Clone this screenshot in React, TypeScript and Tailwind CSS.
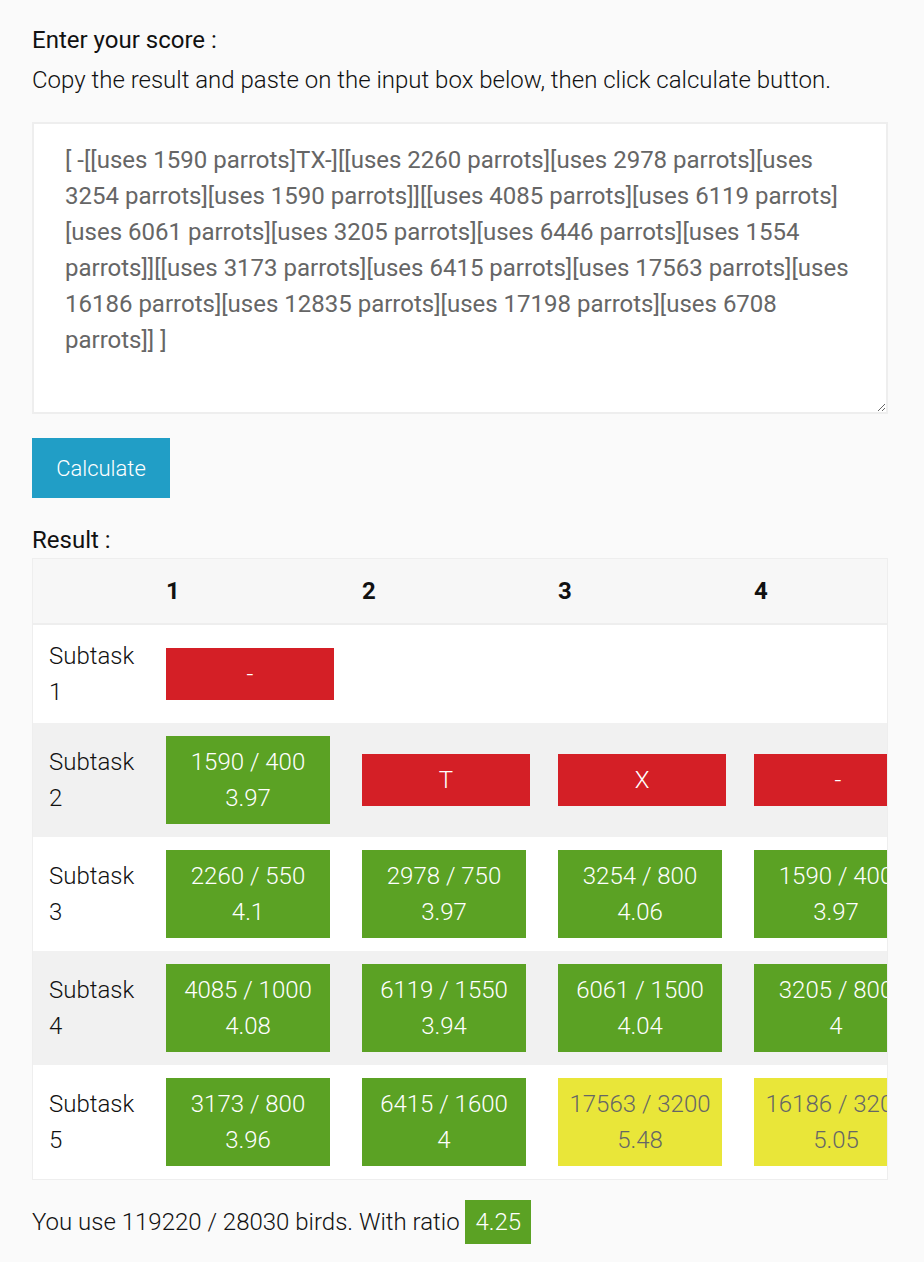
type Cell = { kind: "ok" | "warn" | "bad"; top: string; bottom?: string } | null;

const rows: Cell[][] = [
  [{ kind: "bad", top: "-" }, null, null, null],
  [
    { kind: "ok", top: "1590 / 400", bottom: "3.97" },
    { kind: "bad", top: "T" },
    { kind: "bad", top: "X" },
    { kind: "bad", top: "-" },
  ],
  [
    { kind: "ok", top: "2260 / 550", bottom: "4.1" },
    { kind: "ok", top: "2978 / 750", bottom: "3.97" },
    { kind: "ok", top: "3254 / 800", bottom: "4.06" },
    { kind: "ok", top: "1590 / 400", bottom: "3.97" },
  ],
  [
    { kind: "ok", top: "4085 / 1000", bottom: "4.08" },
    { kind: "ok", top: "6119 / 1550", bottom: "3.94" },
    { kind: "ok", top: "6061 / 1500", bottom: "4.04" },
    { kind: "ok", top: "3205 / 800", bottom: "4" },
  ],
  [
    { kind: "ok", top: "3173 / 800", bottom: "3.96" },
    { kind: "ok", top: "6415 / 1600", bottom: "4" },
    { kind: "warn", top: "17563 / 3200", bottom: "5.48" },
    { kind: "warn", top: "16186 / 3200", bottom: "5.05" },
  ],
];

const scoreText =
  "[ -[[uses 1590 parrots]TX-][[uses 2260 parrots][uses 2978 parrots][uses 3254 parrots][uses 1590 parrots]][[uses 4085 parrots][uses 6119 parrots][uses 6061 parrots][uses 3205 parrots][uses 6446 parrots][uses 1554 parrots]][[uses 3173 parrots][uses 6415 parrots][uses 17563 parrots][uses 16186 parrots][uses 12835 parrots][uses 17198 parrots][uses 6708 parrots]] ]";

function ScoreBox({ cell }: { cell: Cell }) {
  if (!cell) return null;
  if (cell.kind === "bad") {
    return (
      <div className="w-[168px] bg-[#d41f26] py-2 text-center leading-9 text-white">{cell.top}</div>
    );
  }
  const color = cell.kind === "ok" ? "bg-[#5ba224] text-white" : "bg-[#e9e639] text-[#666666]";
  return (
    <div className={`w-[164px] py-2 text-center leading-9 whitespace-nowrap ${color}`}>
      <div>{cell.top}</div>
      <div>{cell.bottom}</div>
    </div>
  );
}

export default function App() {
  return (
    <div className="min-h-screen bg-[#fafafa] font-['Roboto',sans-serif] text-[24px] text-[#111111]">
      <div className="pl-8 pr-9 pt-[22px] pb-8">
        <p className="leading-9">Enter your score :</p>
        <p className="mt-1 font-light leading-9">
          Copy the result and paste on the input box below, then click calculate button.
        </p>

        <textarea
          readOnly
          value={scoreText}
          className="mt-6 block h-[292px] w-full border-2 border-[#eeeeee] bg-white px-[31px] pt-[18px] font-['Roboto',sans-serif] text-[24px] leading-9 text-[#666666] outline-none"
        />

        <button className="mt-6 h-[60px] w-[138px] bg-[#219ec6] text-[22px] font-light text-white">
          Calculate
        </button>

        <p className="mt-6 leading-9">Result :</p>

        <div className="overflow-hidden border border-[#eeeeee] bg-white">
          <table className="w-[901px] table-fixed border-collapse">
            <colgroup>
              <col className="w-[117px]" />
              <col className="w-[196px]" />
              <col className="w-[196px]" />
              <col className="w-[196px]" />
              <col className="w-[196px]" />
            </colgroup>
            <thead>
              <tr className="border-b-2 border-[#eeeeee] bg-[#f7f7f7]">
                <th />
                {[1, 2, 3, 4].map((n) => (
                  <th key={n} className="py-[14px] pl-4 text-left font-bold leading-9">
                    {n}
                  </th>
                ))}
              </tr>
            </thead>
            <tbody>
              {rows.map((row, i) => (
                <tr key={i} className={i % 2 === 1 ? "bg-[#f1f1f1]" : "bg-white"}>
                  <td className="py-[13px] pl-4 pr-4 align-middle font-light leading-9">
                    Subtask {i + 1}
                  </td>
                  {row.map((cell, j) => (
                    <td key={j} className="py-[13px] pl-4 align-middle font-light">
                      <ScoreBox cell={cell} />
                    </td>
                  ))}
                </tr>
              ))}
            </tbody>
          </table>
        </div>

        <p className="mt-5 font-light leading-9">
          You use 119220 / 28030 birds. With ratio{" "}
          <span className="inline-block bg-[#5ba224] px-[10px] py-1 leading-9 text-white">4.25</span>
        </p>
      </div>
    </div>
  );
}
